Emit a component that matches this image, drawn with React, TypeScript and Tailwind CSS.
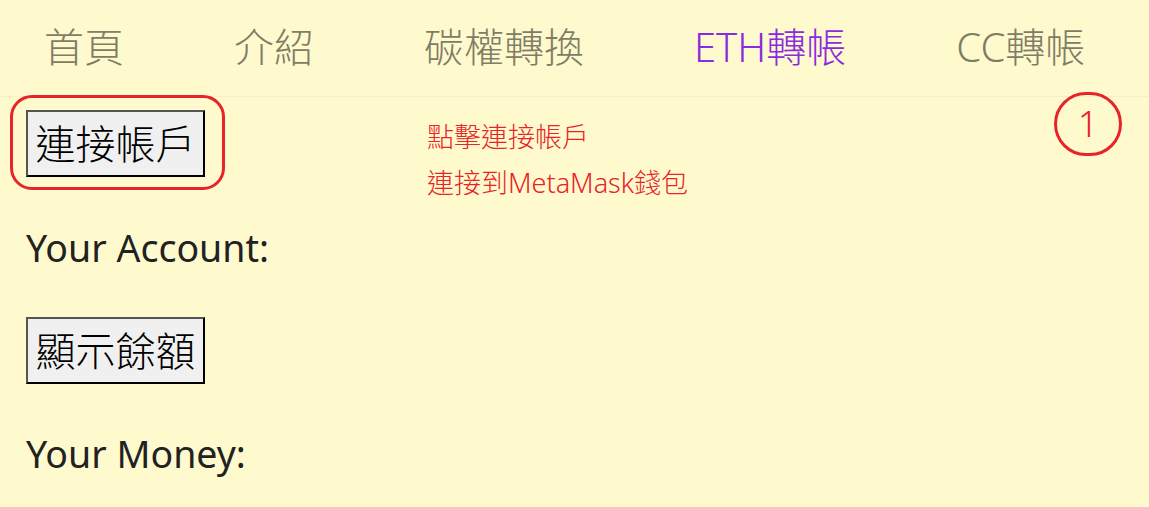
const navItems = [
  { label: '首頁', active: false },
  { label: '介紹', active: false },
  { label: '碳權轉換', active: false },
  { label: 'ETH轉帳', active: true },
  { label: 'CC轉帳', active: false },
];

const font = "font-['Noto_Sans','Noto_Sans_CJK_TC',sans-serif]";

function OldButton({ children }: { children: React.ReactNode }) {
  return (
    <button className="h-[67px] w-[179px] px-[7px] bg-[#f0f0f0] border-2 border-t-[#555] border-l-[#555] border-r-black border-b-black text-[40px] font-light leading-none text-black">
      {children}
    </button>
  );
}

export default function App() {
  return (
    <div className={`min-h-screen w-full bg-[#fffacd] ${font} text-[#222]`}>
      {/* nav */}
      <nav className="h-[97px] flex items-center gap-[110px] pl-[44px] border-b border-[#f7f0c4]">
        {navItems.map((n) => (
          <span
            key={n.label}
            className={`text-[40px] font-light leading-none pb-[2px] ${n.active ? 'text-[#8a2be2]' : 'text-[#807d66]'}`}
          >
            {n.label}
          </span>
        ))}
      </nav>

      <div className="relative px-[26px]">
        {/* step marker */}
        <div className="absolute right-[27px] top-[-5px] w-[68px] h-[64px] rounded-full border-[3px] border-[#e8232a] flex items-center justify-center text-[36px] font-light leading-none text-[#e8232a]">
          1
        </div>

        <div className="flex items-start h-[124px] pt-[13px]">
          <div className="relative">
            <div className="absolute left-[-16px] top-[-15px] w-[215px] h-[95px] rounded-[22px] border-[3px] border-[#e8232a]"></div>
            <OldButton>連接帳戶</OldButton>
          </div>
          <div className="ml-[222px] mt-[4px] text-[27px] font-light leading-[46px] text-[#e8232a]">
            <p>點擊連接帳戶</p>
            <p>連接到MetaMask錢包</p>
          </div>
        </div>

        <p className="text-[37.5px] leading-[54px]">Your Account:</p>

        <div className="mt-[42px]">
          <OldButton>顯示餘額</OldButton>
        </div>

        <p className="mt-[43px] text-[37.5px] leading-[54px]">Your Money:</p>
      </div>
    </div>
  );
}
